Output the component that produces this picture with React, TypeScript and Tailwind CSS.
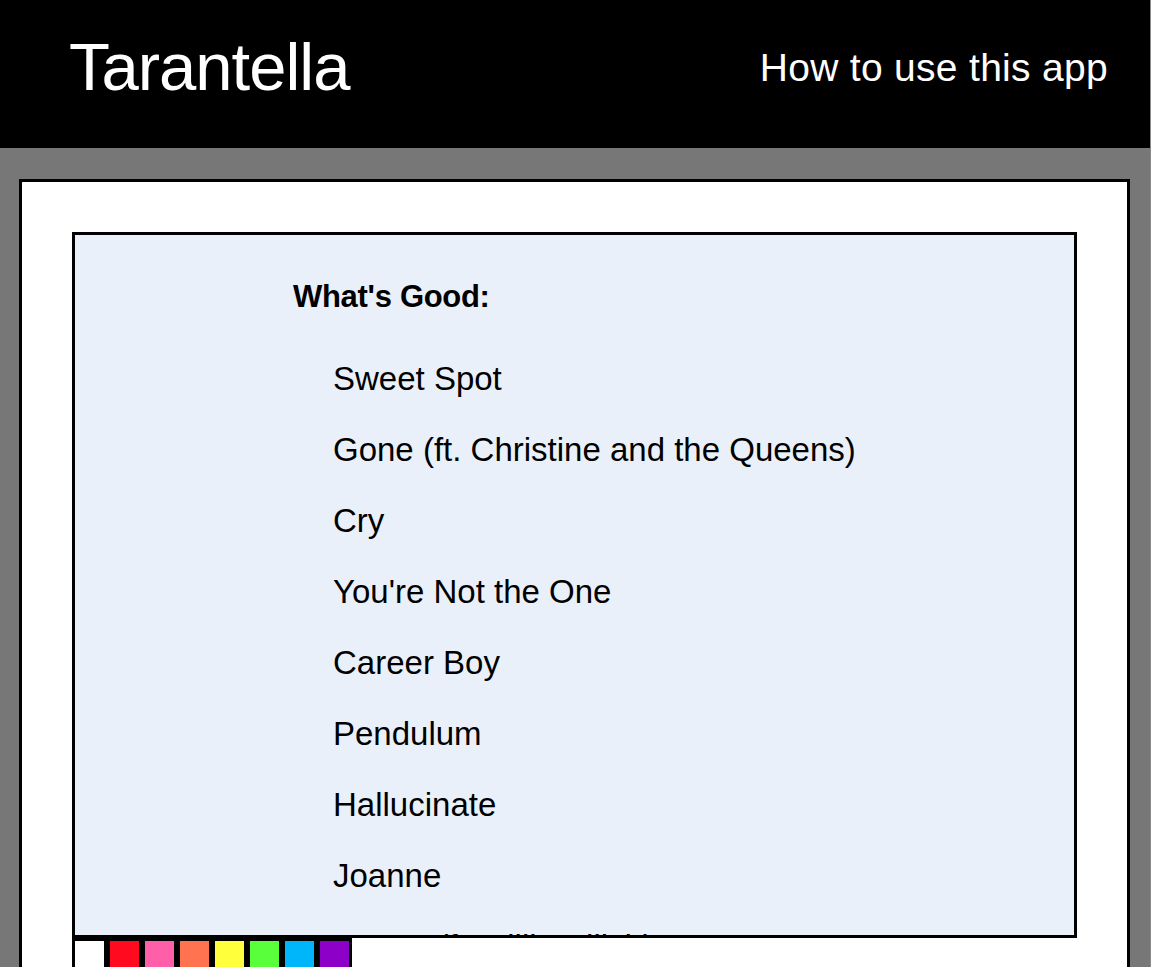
const SONGS = [
  "Sweet Spot",
  "Gone (ft. Christine and the Queens)",
  "Cry",
  "You're Not the One",
  "Career Boy",
  "Pendulum",
  "Hallucinate",
  "Joanne",
  "Guess (ft. Billie Eilish)",
  "Vroom Vroom",
];

const SWATCHES = [
  "bg-white",
  "bg-[#ff0a1e]",
  "bg-[#ff5fa8]",
  "bg-[#ff7350]",
  "bg-[#ffff3c]",
  "bg-[#5aff3c]",
  "bg-[#00b6fa]",
  "bg-[#8c00c8]",
];

export default function App() {
  return (
    <div className="min-h-screen bg-[#777777] border-r border-[#8c8c8c] font-['Liberation_Sans',Arial,sans-serif] overflow-hidden">
      {/* ── Header ─────────────────────────────────────────── */}
      <header className="h-[148px] bg-black flex items-center justify-between pl-[69px] pr-[42px]">
        <h1 className="text-white text-[67px] leading-none tracking-[-1px] pb-[15px]">Tarantella</h1>
        <a className="text-white text-[39px] leading-none tracking-[0.3px] pb-[14px] cursor-pointer">How to use this app</a>
      </header>

      {/* ── Main panel ─────────────────────────────────────── */}
      <main className="pt-[31px] pl-[19px] pr-[20px]">
        <div className="bg-white border-[3px] border-black pt-[50px] px-[50px] h-[900px]">
          <div className="bg-[#eaf0f9] border-[3px] border-black h-[706px] overflow-hidden">
            <div className="pl-[218px] pt-[44px]">
              <h2 className="text-black text-[31px] font-bold leading-[36px] tracking-[-0.3px]">What's Good:</h2>
              <ul className="pl-[40px] mt-[28px]">
                {SONGS.map((song) => (
                  <li key={song} className="text-black text-[33px] leading-[71px] h-[71px]">
                    {song}
                  </li>
                ))}
              </ul>
            </div>
          </div>

          {/* colour palette */}
          <div className="flex">
            {SWATCHES.map((c) => (
              <div key={c} className={`w-[35px] h-[35px] border-[3px] border-black ${c}`} />
            ))}
          </div>
        </div>
      </main>
    </div>
  );
}
